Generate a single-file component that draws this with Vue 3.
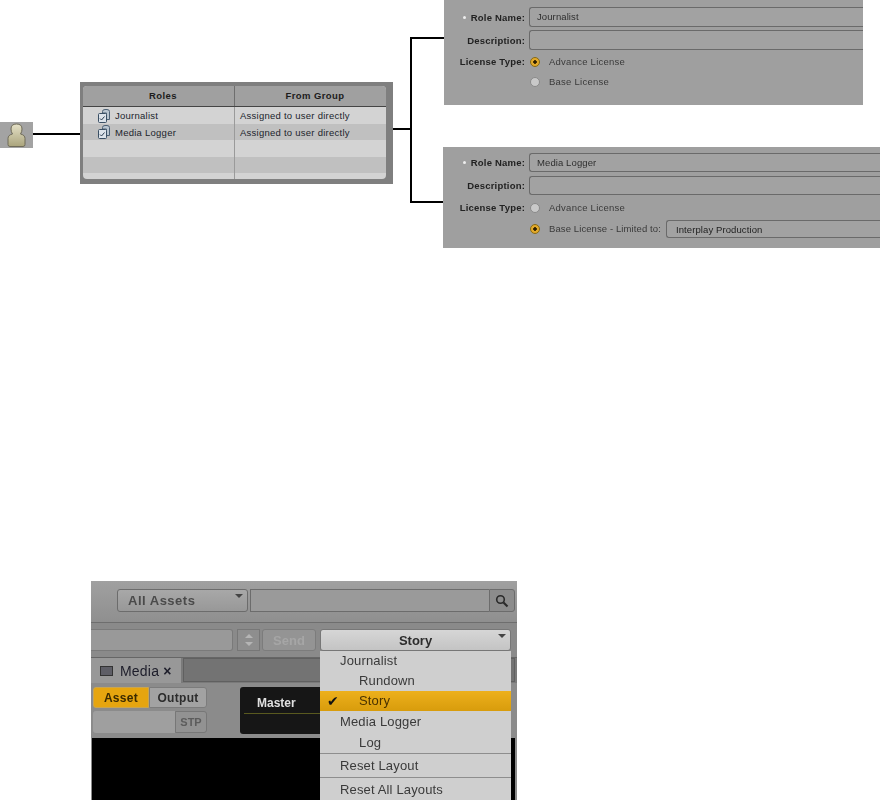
<script setup>
const roles = [
  { name: 'Journalist', group: 'Assigned to user directly' },
  { name: 'Media Logger', group: 'Assigned to user directly' },
  { name: '', group: '' },
  { name: '', group: '' }
]

const menuItems = [
  { label: 'Journalist', cls: 'head' },
  { label: 'Rundown', cls: 'sub' },
  { label: 'Story', cls: 'sub active', checked: true },
  { label: 'Media Logger', cls: 'head tall' },
  { label: 'Log', cls: 'sub tall' },
  { label: 'Reset Layout', cls: 'head reset' },
  { label: 'Reset All Layouts', cls: 'head reset' }
]
</script>

<template>
  <div class="page">
    <!-- connector lines of the diagram -->
    <svg class="lines" width="880" height="800" viewBox="0 0 880 800">
      <path d="M33 134H81M393 129H411M444 38H411V202H444" fill="none" stroke="#000" stroke-width="2" />
    </svg>

    <div class="user-icon">
      <svg width="33" height="26" viewBox="0 0 33 26">
        <defs>
          <linearGradient id="body" x1="0" y1="0" x2="0" y2="1">
            <stop offset="0" stop-color="#e6e2c8" />
            <stop offset="1" stop-color="#aaa47c" />
          </linearGradient>
        </defs>
        <path d="M10 24.500q-2 0-2-2v-6q0-3.500 4.500-4.500q-1.500-2-1.500-5q0-5 5.500-5t5.500 5q0 3-1.500 5q4.500 1 4.500 4.500v6q0 2-2 2z" fill="url(#body)" stroke="#6f6b58" stroke-width="1" />
      </svg>
    </div>

    <div class="roles-panel">
      <div class="roles-table">
        <div class="roles-row header">
          <div>Roles</div>
          <div>From Group</div>
        </div>
        <div v-for="(r, i) in roles" :key="i" class="roles-row" :class="{ alt: i % 2 === 1 }">
          <div class="role-cell">
            <svg v-if="r.name" class="role-icon" width="12" height="14" viewBox="0 0 12 14">
              <path d="M4.500 4V2.500q0-2 2.500-2h2q2.500 0 2.500 2V10.500H8.500V4z" fill="#b9c5d0" stroke="#4d6175" />
              <rect x="0.500" y="4.500" width="8" height="9" rx="1" fill="#dce3ea" stroke="#3a4f64" />
              <path d="M2 9.500l1.500 1.500l3-3.500" fill="none" stroke="#2a3d52" stroke-width="1" />
            </svg>
            {{ r.name }}
          </div>
          <div class="group-cell">{{ r.group }}</div>
        </div>
        <div class="roles-row tail"><div></div><div></div></div>
      </div>
    </div>

    <div class="form form-one">
      <div class="field-row">
        <label><i class="req"></i>Role Name:</label>
        <div class="input">Journalist</div>
      </div>
      <div class="field-row">
        <label>Description:</label>
        <div class="input"></div>
      </div>
      <div class="field-row radio-row">
        <label>License Type:</label>
        <span class="radio on"></span><span class="radio-text">Advance License</span>
      </div>
      <div class="field-row radio-row">
        <label></label>
        <span class="radio"></span><span class="radio-text">Base License</span>
      </div>
    </div>

    <div class="form form-two">
      <div class="field-row">
        <label><i class="req"></i>Role Name:</label>
        <div class="input">Media Logger</div>
      </div>
      <div class="field-row">
        <label>Description:</label>
        <div class="input"></div>
      </div>
      <div class="field-row radio-row">
        <label>License Type:</label>
        <span class="radio"></span><span class="radio-text">Advance License</span>
      </div>
      <div class="field-row radio-row">
        <label></label>
        <span class="radio on"></span><span class="radio-text limited">Base License - Limited to:</span>
        <div class="select">Interplay Production</div>
      </div>
    </div>

    <div class="app">
      <div class="search-bar">
        <div class="assets">All Assets<span class="arrow"></span></div>
        <div class="search-input"></div>
        <div class="search-btn">
          <svg width="14" height="14" viewBox="0 0 14 14">
            <circle cx="5.500" cy="5.500" r="3.800" fill="none" stroke="#2a2a2a" stroke-width="1.600" />
            <path d="M8.500 8.500L12.500 12.500" stroke="#2a2a2a" stroke-width="2.200" />
          </svg>
        </div>
      </div>
      <div class="send-bar">
        <div class="send-input"></div>
        <div class="spinner"><span class="up"></span><span class="down"></span></div>
        <div class="send-btn">Send</div>
        <div class="layout-select">Story<span class="arrow"></span></div>
      </div>
      <div class="tab-bar">
        <div class="tab">
          <span class="monitor"></span>Media <b>×</b>
        </div>
        <div class="tab-rest"></div>
      </div>
      <div class="media-body">
        <div class="media-tools">
          <div class="left-tools">
            <div class="toggle">
              <span class="selected">Asset</span>
              <span>Output</span>
            </div>
            <div class="stp-row">
              <div class="stp-input"></div>
              <div class="stp">STP</div>
            </div>
          </div>
          <div class="master"><span>Master</span></div>
        </div>
        <div class="video"></div>
      </div>

      <div class="menu">
        <div v-for="m in menuItems" :key="m.label" class="menu-item" :class="m.cls">
          <span v-if="m.checked" class="check">✔</span>{{ m.label }}
        </div>
      </div>
    </div>
  </div>
</template>

<style>
html, body {
  background: #fff;
}
</style>

<style scoped>
.page {
  position: relative;
  width: 880px;
  height: 800px;
  overflow: hidden;
  background: #fff;
  font-family: "Liberation Sans", Arial, sans-serif;
}

.lines {
  position: absolute;
  left: 0;
  top: 0;
}

.user-icon {
  position: absolute;
  left: 0;
  top: 122px;
  width: 33px;
  height: 26px;
  background: #a3a3a3;
}

.roles-panel {
  position: absolute;
  left: 80px;
  top: 82px;
  width: 313px;
  height: 102px;
  box-sizing: border-box;
  padding: 4px 7px 5px 3px;
  background: #7f7f7f;
}

.roles-table {
  height: 100%;
  border-radius: 4px;
  overflow: hidden;
  background: #d3d3d3;
  font-size: 9.5px;
  letter-spacing: 0.25px;
  color: #20242c;
}

.roles-row {
  display: grid;
  grid-template-columns: 152px 1fr;
  height: 16.500px;
  line-height: 17px;
}

.roles-row > div:first-child {
  border-right: 1px solid #9a9a9a;
}

.roles-row.alt {
  background: #c0c0c0;
}

.roles-row.tail {
  height: 6px;
}

.roles-row.header {
  height: 21px;
  line-height: 20px;
  box-sizing: border-box;
  border-bottom: 1px solid #444;
  background: #a0a0a0;
  text-align: center;
  font-weight: bold;
  font-size: 9.5px;
  letter-spacing: 0.4px;
  color: #1c1c1c;
}

.roles-row.header > div {
  padding-left: 9px;
}

.roles-row.header > div:first-child {
  border-right-color: #6e6e6e;
}

.role-cell {
  display: flex;
  align-items: center;
  gap: 5px;
  padding-left: 15px;
}

.group-cell {
  padding-left: 5px;
}

.form {
  position: absolute;
  box-sizing: border-box;
  background: #9f9f9f;
  font-size: 9.5px;
  letter-spacing: 0.2px;
  color: #1e1e1e;
  display: flex;
  flex-direction: column;
  filter: blur(0.3px);
}

.form-one {
  left: 444px;
  top: 0;
  width: 419px;
  height: 105px;
  padding-top: 7px;
  gap: 3px;
}

.form-two {
  left: 443px;
  top: 147px;
  width: 437px;
  height: 101px;
  padding-top: 6px;
  gap: 4px;
}

.form-one .field-row label {
  width: 81px;
}

.form-two .field-row label {
  width: 82px;
}

.field-row {
  display: flex;
  align-items: center;
  height: 20px;
}

.form-two .field-row {
  height: 19px;
}

.field-row label {
  flex: none;
  position: relative;
  text-align: right;
  font-weight: bold;
  color: #222;
}

.req {
  position: absolute;
  right: 59px;
  top: 4px;
  width: 3px;
  height: 3px;
  border-radius: 50%;
  background: #eee;
}

.input {
  flex: 1;
  height: 100%;
  box-sizing: border-box;
  margin-left: 4px;
  padding-left: 7px;
  line-height: 18px;
  border: 1px solid #6a6a6a;
  border-right: none;
  border-radius: 3px 0 0 3px;
  background: #a2a2a2;
  color: #2e2e2e;
  font-weight: normal;
  letter-spacing: 0.1px;
}

.field-row.radio-row {
  height: 17px;
}

.radio {
  flex: none;
  width: 10px;
  height: 10px;
  margin-left: 5px;
  border-radius: 50%;
  box-sizing: border-box;
  border: 1px solid #8a8a8a;
  background: #c9c9c9;
}

.radio.on {
  border-color: #8a6a10;
  background: radial-gradient(circle, #2c1e00 0 1.500px, #e2a92a 2px);
}

.radio-text {
  margin-left: 9px;
  font-size: 9.5px;
  letter-spacing: 0.25px;
  color: #3a3a3a;
}

.radio-text.limited {
  letter-spacing: 0.1px;
}

.select {
  flex: 1;
  height: 18px;
  box-sizing: border-box;
  margin-left: 5px;
  padding-left: 9px;
  line-height: 17px;
  border: 1px solid #6a6a6a;
  border-right: none;
  border-radius: 3px 0 0 3px;
  background: #a2a2a2;
  color: #222;
  letter-spacing: 0.1px;
}

.app {
  position: absolute;
  left: 91px;
  top: 581px;
  width: 426px;
  height: 219px;
  display: flex;
  flex-direction: column;
  overflow: hidden;
  background: #8a8a8a;
  filter: blur(0.5px);
}

.search-bar {
  flex: none;
  height: 42px;
  box-sizing: border-box;
  display: flex;
  align-items: center;
  padding: 0 2px 2px 26px;
  background: linear-gradient(#a0a0a0, #8f8f8f);
  border-bottom: 1px solid #6e6e6e;
}

.assets {
  position: relative;
  width: 131px;
  height: 23px;
  box-sizing: border-box;
  padding-left: 10px;
  line-height: 22px;
  border: 1px solid #6c6c6c;
  border-radius: 3px;
  background: linear-gradient(#a8a8a8, #989898);
  font-size: 13px;
  font-weight: bold;
  letter-spacing: 0.5px;
  color: #4a4a4a;
}

.arrow {
  position: absolute;
  right: 4px;
  top: 4px;
  border-left: 4px solid transparent;
  border-right: 4px solid transparent;
  border-top: 4px solid #444;
}

.search-input {
  flex: 1;
  height: 23px;
  box-sizing: border-box;
  margin-left: 2px;
  border: 1px solid #6c6c6c;
  border-right: none;
  background: #9a9a9a;
}

.search-btn {
  width: 26px;
  height: 23px;
  box-sizing: border-box;
  display: flex;
  align-items: center;
  justify-content: center;
  border: 1px solid #6c6c6c;
  border-radius: 0 3px 3px 0;
  background: #8c8c8c;
}

.send-bar {
  flex: none;
  height: 35px;
  box-sizing: border-box;
  display: flex;
  align-items: center;
  padding: 0 6px 1px 0;
  background: #8a8a8a;
  border-bottom: 1px solid #666;
}

.send-input {
  width: 142px;
  height: 22px;
  border: 1px solid #7a7a7a;
  border-left: none;
  border-radius: 0 3px 3px 0;
  box-sizing: border-box;
  background: #999;
}

.spinner {
  width: 23px;
  height: 22px;
  margin-left: 4px;
  box-sizing: border-box;
  display: flex;
  flex-direction: column;
  align-items: center;
  justify-content: space-evenly;
  border: 1px solid #777;
  background: linear-gradient(#8e8e8e 49%, #666 49% 52%, #8e8e8e 52%);
}

.up {
  border-left: 4px solid transparent;
  border-right: 4px solid transparent;
  border-bottom: 4px solid #b5b5b5;
}

.down {
  border-left: 4px solid transparent;
  border-right: 4px solid transparent;
  border-top: 4px solid #b5b5b5;
}

.send-btn {
  width: 54px;
  height: 22px;
  margin-left: 2px;
  box-sizing: border-box;
  border: 1px solid #7c7c7c;
  border-radius: 3px;
  background: #949494;
  text-align: center;
  line-height: 21px;
  font-size: 13px;
  font-weight: bold;
  color: #a6a6a6;
}

.layout-select {
  position: relative;
  width: 191px;
  height: 22px;
  margin-left: 4px;
  box-sizing: border-box;
  border: 1px solid #777;
  border-radius: 3px;
  background: linear-gradient(#d6d6d6, #c4c4c4);
  text-align: center;
  line-height: 21px;
  font-size: 13px;
  font-weight: bold;
  color: #2c2c2c;
}

.tab-bar {
  flex: none;
  height: 25px;
  display: flex;
  background: #7a7a7a;
}

.tab {
  width: 90px;
  height: 25px;
  box-sizing: border-box;
  display: flex;
  align-items: center;
  padding-left: 9px;
  background: #989898;
  font-size: 14px;
  letter-spacing: 0.2px;
  color: #1d1d2a;
}

.tab b {
  margin-left: 4px;
}

.monitor {
  width: 11px;
  height: 8px;
  margin-right: 7px;
  border: 1px solid #333;
  background: #5e5e66;
}

.tab-rest {
  flex: 1;
  margin: 0 2px 1px 2px;
  background: #737373;
  border: 1px solid #606060;
  box-sizing: border-box;
}

.media-body {
  flex: 1;
  display: flex;
  flex-direction: column;
  background: #8b8b8b;
}

.media-tools {
  flex: none;
  height: 55px;
  box-sizing: border-box;
  display: flex;
  padding: 4px 0 0 2px;
}

.left-tools {
  width: 114px;
  display: flex;
  flex-direction: column;
  gap: 3px;
}

.toggle {
  display: flex;
  height: 21px;
  font-size: 12px;
  font-weight: bold;
  letter-spacing: 0.3px;
  line-height: 20px;
  color: #2c2c2c;
}

.toggle span {
  width: 58px;
  text-align: center;
  border: 1px solid #7c7c7c;
  border-radius: 0 3px 3px 0;
  box-sizing: border-box;
  background: #a2a2a2;
}

.toggle .selected {
  width: 56px;
  border-radius: 3px 0 0 3px;
  border-color: #c9a550;
  background: #e6a50f;
  color: #3a2a00;
}

.stp-row {
  display: flex;
  height: 22px;
}

.stp-input {
  width: 82px;
  background: #9f9f9f;
  border-radius: 3px 0 0 3px;
}

.stp {
  width: 32px;
  box-sizing: border-box;
  border: 1px solid #777;
  border-radius: 0 3px 3px 0;
  background: #929292;
  text-align: center;
  line-height: 20px;
  font-size: 11px;
  font-weight: bold;
  color: #5c5c5c;
}

.master {
  width: 271px;
  height: 47px;
  box-sizing: border-box;
  margin: 0 0 0 33px;
  padding: 9px 0 0 4px;
  border-radius: 3px 0 0 3px;
  background: #161616;
}

.master span {
  display: block;
  height: 17px;
  padding: 0 0 0 13px;
  border-bottom: 1px solid #59591f;
  font-size: 12px;
  font-weight: bold;
  color: #e0e0e0;
}

.video {
  flex: 1;
  margin-left: 1px;
  margin-right: 2px;
  background: #000;
}

/* layout dropdown, open over the panel */
.menu {
  position: absolute;
  left: 229px;
  top: 70px;
  width: 191px;
  height: 149px;
  background: #cfcfcf;
  font-size: 13px;
  letter-spacing: 0.15px;
  color: #3a3a3a;
}

.menu-item {
  position: relative;
  height: 20px;
  line-height: 20px;
  padding-left: 20px;
}

.menu-item.sub {
  padding-left: 39px;
}

.menu-item.tall {
  height: 21px;
  line-height: 21px;
}

.menu-item.active {
  background: linear-gradient(#edb01c, #d89c0c);
  color: #4a3300;
}

.menu-item.reset {
  height: 24px;
  line-height: 24px;
  border-top: 1px solid #8e8e8e;
  box-sizing: border-box;
}

.check {
  position: absolute;
  left: 7px;
  top: 0;
  font-family: "DejaVu Sans", sans-serif;
  font-size: 14px;
  font-weight: bold;
  color: #111;
}
</style>
